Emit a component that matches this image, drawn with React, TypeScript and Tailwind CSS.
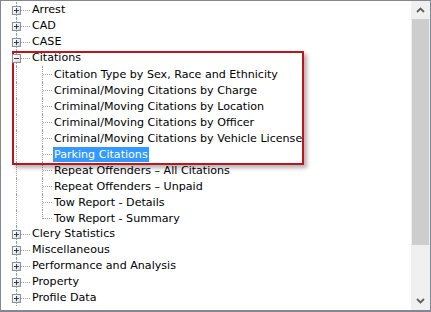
import React from "react";

type Node = { label: string; kids?: string[]; selected?: string };

const tree: Node[] = [
  { label: "Arrest" },
  { label: "CAD" },
  { label: "CASE" },
  {
    label: "Citations",
    kids: [
      "Citation Type by Sex, Race and Ethnicity",
      "Criminal/Moving Citations by Charge",
      "Criminal/Moving Citations by Location",
      "Criminal/Moving Citations by Officer",
      "Criminal/Moving Citations by Vehicle License",
      "Parking Citations",
      "Repeat Offenders \u2013 All Citations",
      "Repeat Offenders \u2013 Unpaid",
      "Tow Report - Details",
      "Tow Report - Summary",
    ],
    selected: "Parking Citations",
  },
  { label: "Clery Statistics" },
  { label: "Miscellaneous" },
  { label: "Performance and Analysis" },
  { label: "Property" },
  { label: "Profile Data" },
];

function Toggle({ open }: { open?: boolean }) {
  return (
    <div className="relative z-10 w-[9px] h-[9px] border border-[#8f8f8f] bg-gradient-to-br from-white to-[#dcdcdc] flex items-center justify-center">
      <div className="absolute w-[5px] h-px bg-[#2a3f6e]" />
      {!open && <div className="absolute w-px h-[5px] bg-[#2a3f6e]" />}
    </div>
  );
}

function RootRow({ node }: { node: Node }) {
  return (
    <div className="h-4 flex items-center">
      <div className="relative w-[30px] h-4 flex items-center shrink-0">
        <div className="absolute left-[15px] top-0 bottom-0 border-l border-dotted border-[#a0a0a0]" />
        <div className="absolute left-[20px] w-[9px] top-[8px] border-t border-dotted border-[#a0a0a0]" />
        <div className="absolute left-[11px] top-[4px]">
          <Toggle open={!!node.kids} />
        </div>
      </div>
      <span className="px-px leading-4">{node.label}</span>
    </div>
  );
}

function ChildRow({ label, last, selected }: { label: string; last: boolean; selected: boolean }) {
  return (
    <div className="h-4 flex items-center">
      <div className="relative w-[52px] h-4 shrink-0">
        <div className="absolute left-[15px] top-0 bottom-0 border-l border-dotted border-[#a0a0a0]" />
        <div className={`absolute left-[41px] top-0 border-l border-dotted border-[#a0a0a0] ${last ? "h-[9px]" : "h-4"}`} />
        <div className="absolute left-[42px] w-[9px] top-[8px] border-t border-dotted border-[#a0a0a0]" />
      </div>
      <span className={`px-px leading-[15px] ${selected ? "bg-[#3399ff] text-white" : ""}`}>{label}</span>
    </div>
  );
}

export default function App() {
  return (
    <div className="w-[431px] h-[312px] bg-white relative overflow-hidden">
      <div className="absolute inset-0 border border-[#828790] border-b-2 flex">
        <div
          className="flex-1 pt-px text-[11.1px] text-black overflow-hidden"
          style={{ fontFamily: "Tahoma, 'DejaVu Sans', Verdana, sans-serif" }}
        >
          {tree.map((n) => (
            <div key={n.label}>
              <RootRow node={n} />
              {n.kids?.map((k, i) => (
                <ChildRow key={k} label={k} last={i === n.kids!.length - 1} selected={k === n.selected} />
              ))}
            </div>
          ))}
        </div>
        <div className="w-[19px] bg-[#f0f0f0] flex flex-col">
          <div className="h-[18px] flex items-center justify-center">
            <svg width="9" height="6" viewBox="0 0 9 6">
              <path d="M1 5 L4.5 1.5 L8 5" stroke="#606060" strokeWidth="1.8" fill="none" />
            </svg>
          </div>
          <div className="mx-px h-[226px] bg-[#cdcdcd]" />
          <div className="flex-1" />
          <div className="h-[18px] flex items-center justify-center">
            <svg width="9" height="6" viewBox="0 0 9 6">
              <path d="M1 1 L4.5 4.5 L8 1" stroke="#606060" strokeWidth="1.8" fill="none" />
            </svg>
          </div>
        </div>
      </div>
      <div className="absolute left-[12px] top-[51px] w-[292px] h-[114px] border-2 border-[#c0141c] shadow-[3px_3px_4px_rgba(0,0,0,0.3)]" />
    </div>
  );
}
